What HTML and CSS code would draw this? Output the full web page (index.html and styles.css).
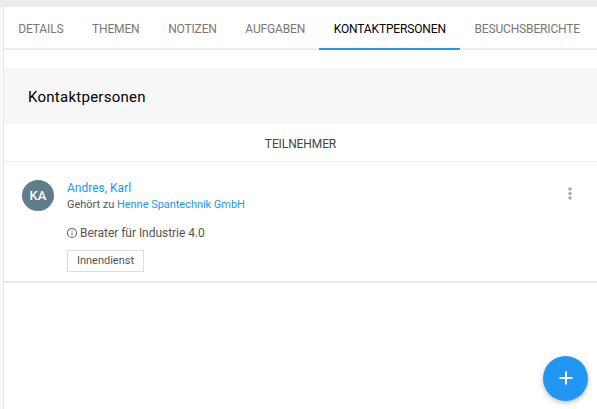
FILE: index.html
```html
<!DOCTYPE html>
<html lang="de">
<head>
<meta charset="utf-8">
<title>Kontaktpersonen</title>
<link rel="stylesheet" href="styles.css">
</head>
<body>
<main class="panel">
  <nav class="tabs">
    <a class="tab">DETAILS</a>
    <a class="tab">THEMEN</a>
    <a class="tab">NOTIZEN</a>
    <a class="tab">AUFGABEN</a>
    <a class="tab active">KONTAKTPERSONEN</a>
    <a class="tab">BESUCHSBERICHTE</a>
  </nav>
  <section class="card">
    <h1 class="title">Kontaktpersonen</h1>
    <h2 class="group">TEILNEHMER</h2>
    <article class="contact">
      <div class="avatar">KA</div>
      <div class="info">
        <a class="name">Andres, Karl</a>
        <div class="company">Gehört zu <a>Henne Spantechnik GmbH</a></div>
        <div class="role">
          <svg class="info-icon" viewBox="2 2 20 20"><path d="M11 17h2v-6h-2v6zm1-15a10 10 0 1 0 0 20 10 10 0 0 0 0-20zm0 18a8 8 0 1 1 0-16 8 8 0 0 1 0 16zM11 9h2V7h-2v2z"/></svg>
          <span>Berater für Industrie 4.0</span>
        </div>
        <div class="tag">Innendienst</div>
      </div>
      <svg class="more" viewBox="0 0 4 13"><circle cx="2" cy="2" r="1.7"/><circle cx="2" cy="6.5" r="1.7"/><circle cx="2" cy="11" r="1.7"/></svg>
    </article>
  </section>
</main>
<button class="fab" aria-label="Hinzufügen"><svg viewBox="0 0 14 14"><path d="M6 0.5h2V6h5.5v2H8v5.5H6V8H0.5V6H6z"/></svg></button>
</body>
</html>
```
FILE: styles.css
```css
* { box-sizing: border-box; }
body {
  margin: 0;
  height: 409px;
  padding: 7px 0 0 3px;
  overflow: hidden;
  background: linear-gradient(#ebebeb 7px, #f9f9f9 7px);
  font-family: Roboto, "Liberation Sans", sans-serif;
  color: #555;
}
.panel {
  height: 402px;
  background: #fff;
  border-left: 1px solid #e7e7e7;
}
.tabs {
  display: flex;
  height: 43px;
  margin-bottom: 18px;
  box-shadow: inset 0 -2px #eee;
}
.tab {
  flex: none;
  padding: 0 14.3px;
  line-height: 45px;
  height: 43px;
  font-size: 12px;
  letter-spacing: -0.15px;
  color: #777;
  white-space: nowrap;
}
.active {
  color: #000;
  box-shadow: inset 0 -2px #2196f3;
}
.card {
  height: 214px;
  border-bottom: 1px solid #dedede;
  box-shadow: 0 1px 0 #f1f1f1;
}
.title {
  margin: 0;
  height: 56px;
  padding-left: 24px;
  background: #f7f7f7;
  color: #000;
  font-size: 15px;
  font-weight: 400;
  letter-spacing: 0.26px;
  line-height: 59px;
}
.group {
  margin: 0;
  height: 38px;
  border-bottom: 1px solid #eee;
  color: #444;
  font-size: 12px;
  font-weight: 400;
  letter-spacing: -0.1px;
  line-height: 41px;
  text-align: center;
}
.contact {
  display: flex;
  padding: 18px 25px 0 18px;
}
.avatar {
  width: 32px;
  height: 31px;
  border-radius: 50%;
  background: #607d8b;
  color: #fff;
  font-size: 13px;
  font-weight: 500;
  line-height: 31px;
  text-align: center;
}
.info {
  flex: 1;
  margin-left: 13px;
}
.name {
  display: block;
  font-size: 12px;
  line-height: 16px;
}
.info a { color: #2196f3; }
.company {
  font-size: 11px;
  letter-spacing: -0.03px;
  line-height: 18px;
}
.role {
  display: flex;
  align-items: center;
  height: 16px;
  margin-top: 11px;
  font-size: 12px;
  letter-spacing: -0.04px;
}
.info-icon {
  width: 10px;
  height: 10px;
  margin-right: 3px;
  fill: #5c5c6c;
}
.tag {
  width: 77px;
  height: 22px;
  margin-top: 9px;
  border: 1px solid #ddd;
  font-size: 11px;
  line-height: 19px;
  text-align: center;
}
.more {
  width: 4px;
  height: 13px;
  margin-top: 7px;
  fill: #aaa;
}
.fab {
  position: absolute;
  left: 543px;
  top: 356px;
  display: flex;
  align-items: center;
  justify-content: center;
  width: 45px;
  height: 45px;
  padding: 0 0 2px;
  border: 0;
  border-radius: 50%;
  background: #2196f3;
  box-shadow: 0 2px 5px rgba(0, 0, 0, .26);
}
.fab svg {
  width: 14px;
  height: 14px;
  fill: #fff;
}
```
